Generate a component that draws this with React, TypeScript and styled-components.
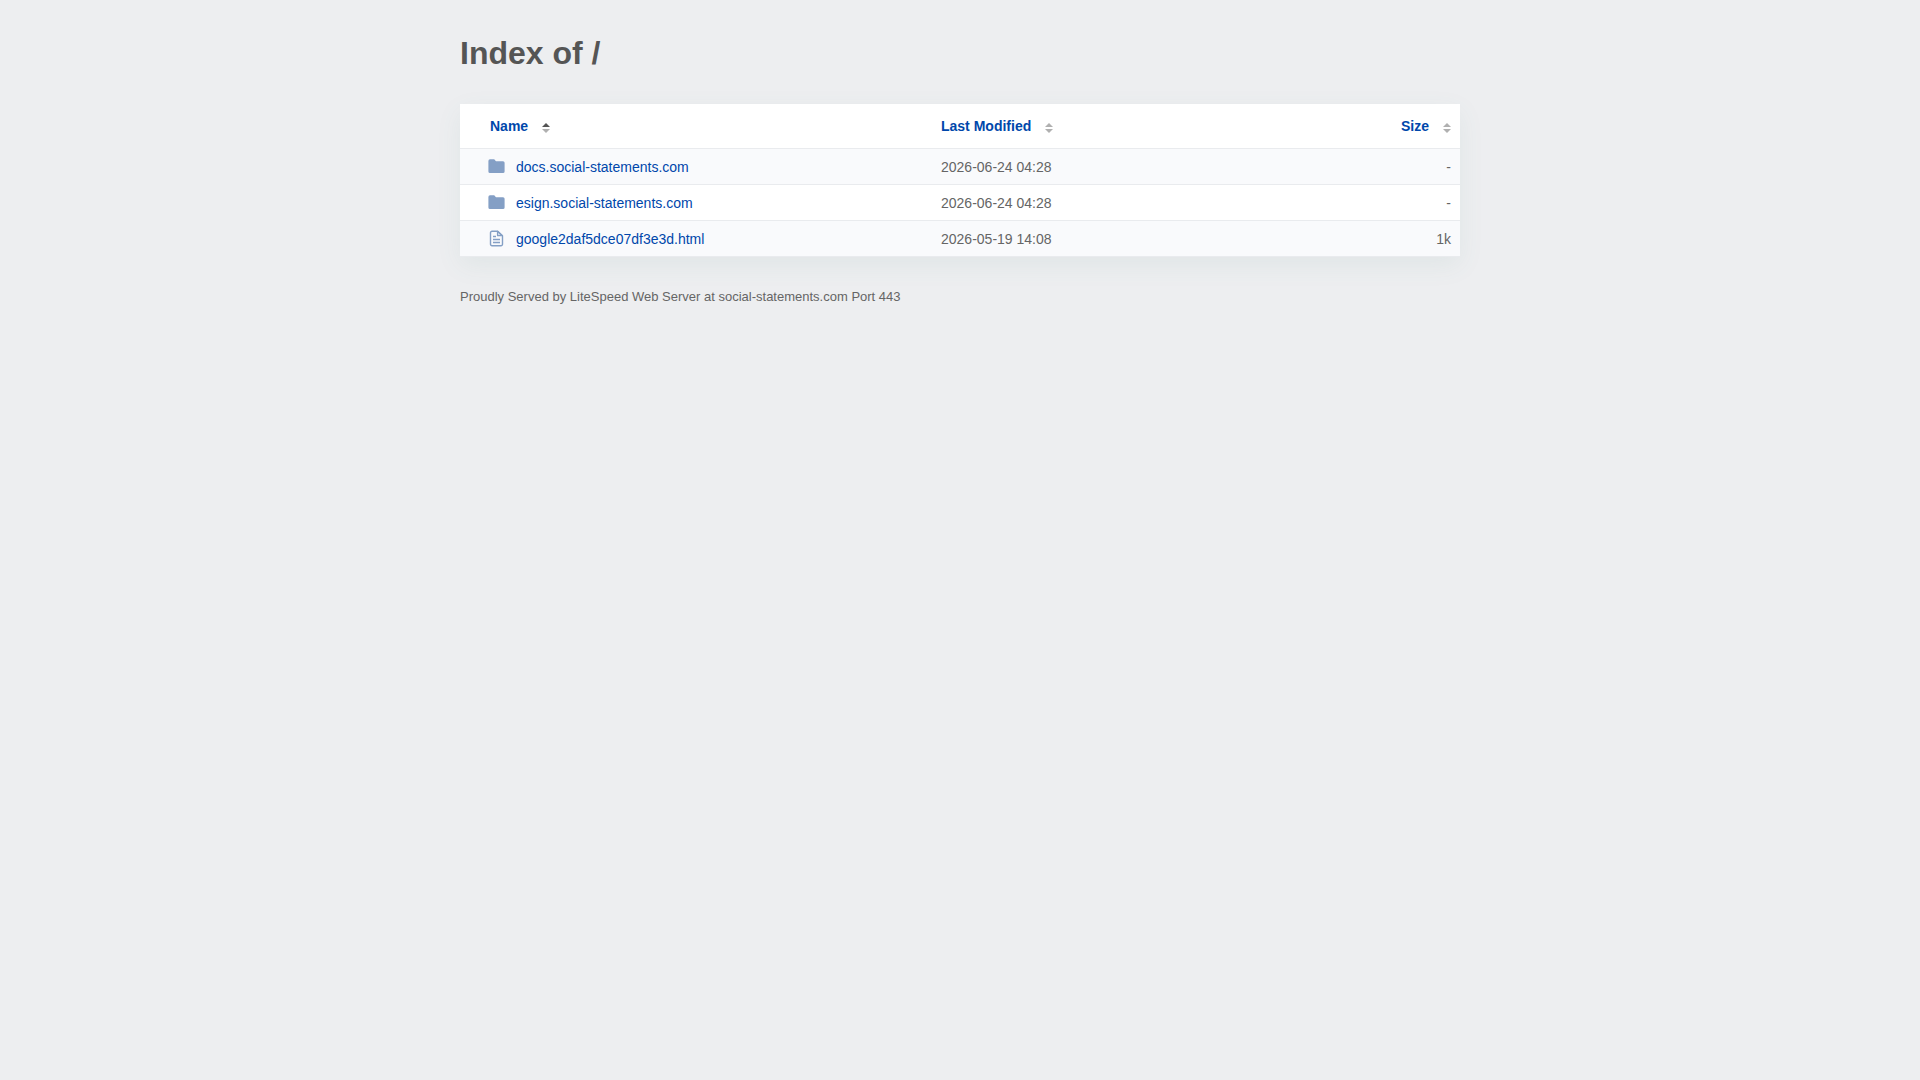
import React from "react";
import styled, { createGlobalStyle } from "styled-components";

const GlobalStyle = createGlobalStyle`
  *, *::before, *::after {
    box-sizing: border-box;
  }

  body {
    margin: 0;
    background: #edeef0;
    color: #545454;
    font-family: Arial, "Liberation Sans", sans-serif;
    font-size: 14px;
    line-height: 20px;
  }
`;

const Content = styled.main`
  max-width: 1000px;
  margin: 0 auto;
`;

const Title = styled.h1`
  margin: 0;
  padding: 33px 0 31px;
  color: #555;
  font-size: 32px;
  font-weight: 700;
  line-height: 40px;
`;

const Listing = styled.table`
  width: 100%;
  table-layout: fixed;
  border-collapse: separate;
  border-spacing: 0;
  background: #fff;
  box-shadow: 0 8px 24px 0 rgba(80, 140, 130, 0.08);
`;

type Column = "name" | "modified" | "size";

const columnWidth = { name: "47%", modified: "35%", size: "18%" };

const HeadCell = styled.th<{ $column: Column }>`
  width: ${(p) => columnWidth[p.$column]};
  padding: ${(p) => (p.$column === "name" ? "12px 8px 12px 30px" : "12px 9px 12px 11px")};
  border-bottom: 1px solid #e9ebee;
  text-align: ${(p) => (p.$column === "size" ? "right" : "left")};
`;

const SortLink = styled.a`
  display: inline-flex;
  align-items: center;
  gap: 14px;
  color: #0047ab;
  font-weight: 700;
  text-decoration: none;
  vertical-align: top;
`;

const SortMark = styled.svg`
  width: 8px;
  height: 10px;
  margin-top: 4px;
`;

const Row = styled.tr`
  &:nth-child(odd) {
    background: #f9fafc;
  }
`;

const Cell = styled.td<{ $column: Column }>`
  height: 36px;
  padding: ${(p) => (p.$column === "name" ? "0 8px 0 28px" : "0 9px 0 11px")};
  border-bottom: 1px solid #e9ebee;
  color: #656565;
  text-align: ${(p) => (p.$column === "size" ? "right" : "left")};
`;

const EntryLink = styled.a`
  display: flex;
  align-items: center;
  gap: 11px;
  color: #0047ab;
  text-decoration: none;
`;

const EntryIcon = styled.svg`
  flex: none;
  width: 17px;
  height: 17px;
`;

const Footer = styled.footer`
  padding: 30px 0;
  color: #656565;
  font-size: 13px;
`;

function SortArrows({ ascending }: { ascending?: boolean }) {
  return (
    <SortMark viewBox="0 0 8 10" aria-hidden="true">
      <path d="M0 4 4 0l4 4z" fill={ascending ? "#545454" : "#b0b0b0"} />
      <path d="M0 6h8l-4 4z" fill="#b0b0b0" />
    </SortMark>
  );
}

function FolderIcon() {
  return (
    <EntryIcon viewBox="0 0 17 17" aria-hidden="true">
      <path
        d="M2 1.3h4.2L8 3.2h7a1.6 1.6 0 0 1 1.6 1.6v8.6A1.6 1.6 0 0 1 15 15H2A1.6 1.6 0 0 1 .4 13.4V2.9A1.6 1.6 0 0 1 2 1.3z"
        fill="#849fc5"
      />
    </EntryIcon>
  );
}

function FileIcon() {
  return (
    <EntryIcon viewBox="0 0 17 17" fill="none" stroke="#849fc5" strokeLinejoin="round" aria-hidden="true">
      <path d="M9.7 1.2H4a1.5 1.5 0 0 0-1.5 1.5v11.6A1.5 1.5 0 0 0 4 15.8h9a1.5 1.5 0 0 0 1.5-1.5V5.7z" strokeWidth="1.4" />
      <path d="M9.5 1.3v4.3h4.8z" fill="#849fc5" fillOpacity="0.3" strokeWidth="1.2" />
      <path d="M5 6.5h3M5 9.5h7M5 12.5h7" strokeWidth="1.3" />
    </EntryIcon>
  );
}

const columns: { key: Column; label: string }[] = [
  { key: "name", label: "Name" },
  { key: "modified", label: "Last Modified" },
  { key: "size", label: "Size" },
];

const entries = [
  { name: "docs.social-statements.com", folder: true, modified: "2026-06-24 04:28", size: "-" },
  { name: "esign.social-statements.com", folder: true, modified: "2026-06-24 04:28", size: "-" },
  { name: "google2daf5dce07df3e3d.html", folder: false, modified: "2026-05-19 14:08", size: "1k" },
];

export default function App() {
  return (
    <>
      <GlobalStyle />
      <Content>
        <Title>Index of /</Title>
        <Listing>
          <thead>
            <tr>
              {columns.map(({ key, label }) => (
                <HeadCell key={key} $column={key} scope="col" aria-sort={key === "name" ? "ascending" : undefined}>
                  <SortLink href={`#sort-${key}`}>
                    {label}
                    <SortArrows ascending={key === "name"} />
                  </SortLink>
                </HeadCell>
              ))}
            </tr>
          </thead>
          <tbody>
            {entries.map((entry) => (
              <Row key={entry.name}>
                <Cell $column="name">
                  <EntryLink href={`#${entry.name}`}>
                    {entry.folder ? <FolderIcon /> : <FileIcon />}
                    {entry.name}
                  </EntryLink>
                </Cell>
                <Cell $column="modified">{entry.modified}</Cell>
                <Cell $column="size">{entry.size}</Cell>
              </Row>
            ))}
          </tbody>
        </Listing>
        <Footer>Proudly Served by LiteSpeed Web Server at social-statements.com Port 443</Footer>
      </Content>
    </>
  );
}
